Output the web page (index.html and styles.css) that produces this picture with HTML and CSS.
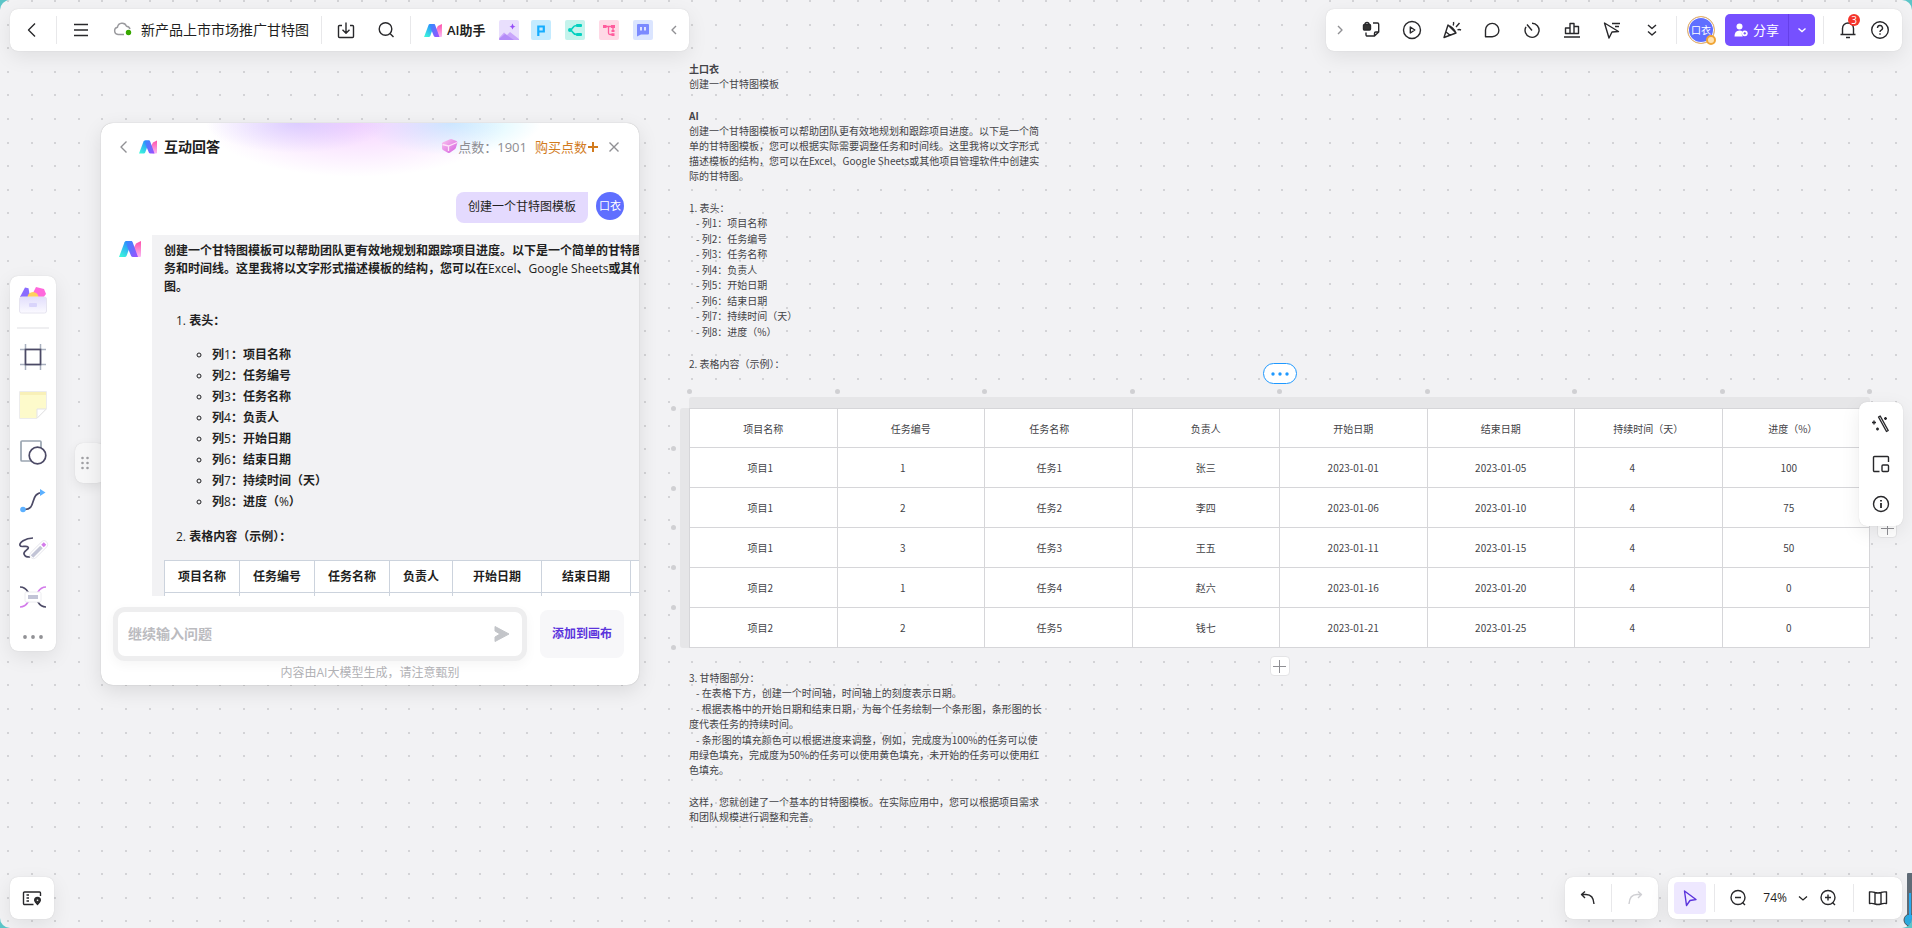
FILE: index.html
```html
<!DOCTYPE html>
<html lang="zh-CN">
<head>
<meta charset="utf-8">
<title>新产品上市市场推广甘特图</title>
<link rel="stylesheet" href="styles.css">
</head>
<body>
<svg class="defs" aria-hidden="true">
  <defs>
    <linearGradient id="g-left" x1="0" y1="1" x2="0.6" y2="0"><stop offset="0" stop-color="#3dffd8"/><stop offset="1" stop-color="#2a8cff"/></linearGradient>
    <linearGradient id="g-mid" x1="0" y1="0" x2="1" y2="1"><stop offset="0" stop-color="#2f8dff"/><stop offset="1" stop-color="#a04dff"/></linearGradient>
    <linearGradient id="g-right" x1="0" y1="0" x2="0" y2="1"><stop offset="0" stop-color="#ff4fa8"/><stop offset="1" stop-color="#f9b8f4"/></linearGradient>
    <linearGradient id="g-gem" x1="0" y1="0" x2="1" y2="1"><stop offset="0" stop-color="#fbc4ee"/><stop offset="1" stop-color="#d45fe0"/></linearGradient>
    <linearGradient id="g-box" x1="0" y1="0" x2="0" y2="1"><stop offset="0" stop-color="#e2defc"/><stop offset="1" stop-color="#fbfaff"/></linearGradient>
    <pattern id="dots" x="7" y="0" width="118" height="118" patternUnits="userSpaceOnUse">
      <path id="dotrow" d="M0 1h2m22 0h2m21 0h2m22 0h2m21 0h2" stroke="#d3d3d6" stroke-width="2"/>
      <use href="#dotrow" y="24"/><use href="#dotrow" y="47"/><use href="#dotrow" y="71"/><use href="#dotrow" y="94"/>
    </pattern>
    <symbol id="logo" viewBox="0 0 22 16">
      <path d="M0 16 5.500 1.200Q6 0 7.200 0H13L7.600 14.800Q7.100 16 5.800 16Z" fill="url(#g-left)"/>
      <path d="M22 0v15q0 1-1 1h-4.500L14 8.500 17 2.500Z" fill="url(#g-right)"/>
      <path d="M7.500 0H12q1.200 0 1.700 1.200L19 16h-5q-1.500 0-2-1.300L8 5Z" fill="url(#g-mid)"/>
    </symbol>
  </defs>
</svg>

<main class="board">
  <svg class="grid" aria-hidden="true"><rect width="100%" height="100%" fill="url(#dots)"/></svg>

  <article class="node">
    <div class="copy">
      <h2>土口衣</h2>
      <p>创建一个甘特图模板</p>
    </div>
    <div class="copy">
      <h2>AI</h2>
      <p>创建一个甘特图模板可以帮助团队更有效地规划和跟踪项目进度。以下是一个简单的甘特图模板，您可以根据实际需要调整任务和时间线。这里我将以文字形式描述模板的结构，您可以在Excel、Google Sheets或其他项目管理软件中创建实际的甘特图。</p>
    </div>
    <div class="copy">
      <p>1. 表头：</p>
      <ul>
        <li>- 列1：项目名称</li><li>- 列2：任务编号</li><li>- 列3：任务名称</li><li>- 列4：负责人</li>
        <li>- 列5：开始日期</li><li>- 列6：结束日期</li><li>- 列7：持续时间（天）</li><li>- 列8：进度（%）</li>
      </ul>
    </div>
    <div class="copy">
      <p>2. 表格内容（示例）：</p>
    </div>

    <section class="sheet">
      <button class="more" aria-label="更多"><svg width="20" height="4" viewBox="0 0 20 4"><g fill="#1e98ff"><circle cx="3" cy="2" r="1.700"/><circle cx="10" cy="2" r="1.700"/><circle cx="17" cy="2" r="1.700"/></g></svg></button>
      <div class="handles cols"><i></i><i></i><i></i><i></i><i></i><i></i><i></i><i></i><i></i></div>
      <div class="handles rows"><i></i><i></i><i></i><i></i><i></i><i></i><i></i></div>
      <div class="strip strip-top"></div>
      <div class="strip strip-left"></div>
      <table class="gantt">
        <thead><tr><th>项目名称</th><th>任务编号</th><th>任务名称</th><th>负责人</th><th>开始日期</th><th>结束日期</th><th>持续时间（天）</th><th>进度（%）</th></tr></thead>
        <tbody>
          <tr><td>项目1</td><td>1</td><td>任务1</td><td>张三</td><td>2023-01-01</td><td>2023-01-05</td><td>4</td><td>100</td></tr>
          <tr><td>项目1</td><td>2</td><td>任务2</td><td>李四</td><td>2023-01-06</td><td>2023-01-10</td><td>4</td><td>75</td></tr>
          <tr><td>项目1</td><td>3</td><td>任务3</td><td>王五</td><td>2023-01-11</td><td>2023-01-15</td><td>4</td><td>50</td></tr>
          <tr><td>项目2</td><td>1</td><td>任务4</td><td>赵六</td><td>2023-01-16</td><td>2023-01-20</td><td>4</td><td>0</td></tr>
          <tr><td>项目2</td><td>2</td><td>任务5</td><td>钱七</td><td>2023-01-21</td><td>2023-01-25</td><td>4</td><td>0</td></tr>
        </tbody>
      </table>
      <button class="add add-row" aria-label="添加行"><svg width="13" height="13" viewBox="0 0 13 13"><path d="M6.500 0v13M0 6.500h13" stroke="#8f8f94"/></svg></button>
      <button class="add add-col" aria-label="添加列"><svg width="13" height="13" viewBox="0 0 13 13"><path d="M6.500 0v13M0 6.500h13" stroke="#8f8f94"/></svg></button>
    </section>

    <div class="copy">
      <p>3. 甘特图部分：</p>
      <p class="item">- 在表格下方，创建一个时间轴，时间轴上的刻度表示日期。</p>
      <p class="item">- 根据表格中的开始日期和结束日期，为每个任务绘制一个条形图，条形图的长度代表任务的持续时间。</p>
      <p class="item">- 条形图的填充颜色可以根据进度来调整，例如，完成度为100%的任务可以使用绿色填充，完成度为50%的任务可以使用黄色填充，未开始的任务可以使用红色填充。</p>
    </div>
    <div class="copy">
      <p>这样，您就创建了一个基本的甘特图模板。在实际应用中，您可以根据项目需求和团队规模进行调整和完善。</p>
    </div>
  </article>

  <header class="bar top-left">
    <button class="ico w46 back" aria-label="返回"><svg width="20" height="20" viewBox="0 0 20 20"><path d="M13 3.500 6.500 10 13 16.500"/></svg></button>
    <span class="rule"></span>
    <button class="ico w48" aria-label="菜单"><svg width="20" height="20" viewBox="0 0 20 20"><path d="M3 4.500h14M3 10h14M3 15.500h14"/></svg></button>
    <svg class="cloud" width="20" height="16" viewBox="0 0 20 16"><path d="M11 12.500H5a3.700 3.700 0 0 1-.5-7.300 4.700 4.700 0 0 1 9-1 4 4 0 0 1 3.500 3" fill="none" stroke="#9a9a9e" stroke-width="1.400"/><circle cx="15.500" cy="10.500" r="2.700" fill="#38a800"/></svg>
    <h1 class="title">新产品上市市场推广甘特图</h1>
    <span class="rule"></span>
    <button class="ico w48" aria-label="导出"><svg width="20" height="20" viewBox="0 0 20 20"><path d="M6 5.500H3.500a1 1 0 0 0-1 1v10a1 1 0 0 0 1 1h13a1 1 0 0 0 1-1v-10a1 1 0 0 0-1-1H14M10 2.500v10.500M6.500 9.700l3.500 3.500 3.500-3.500"/></svg></button>
    <button class="ico w32" aria-label="搜索"><svg width="20" height="20" viewBox="0 0 20 20"><circle cx="9.500" cy="9" r="6.300"/><path d="m14 13.500 3.500 3.500"/></svg></button>
    <span class="rule gap"></span>
    <button class="ai"><svg width="18" height="13" aria-hidden="true"><use href="#logo"/></svg>AI助手</button>
    <button class="tile" aria-label="AI绘画"><svg width="20" height="20" viewBox="0 0 20 20"><rect width="20" height="20" rx="2" fill="#e9dffd"/><path d="M0 18 5 12.500 8 15l3-3 9 7v1H0Z" fill="#c9a6fb"/><path d="m0 19 6-5 9 6H1Z" fill="#b48cf8"/><path d="M13.500 3.500q.4 2.600 3 3-2.600.4-3 3-.4-2.600-3-3 2.600-.4 3-3" fill="#9850f8"/></svg></button>
    <button class="tile" aria-label="AI PPT"><svg width="20" height="20" viewBox="0 0 20 20"><rect width="20" height="20" rx="2" fill="#c4ebff"/><path d="M7.300 16V6.500h5.500v5H7.500" fill="none" stroke="#15adff" stroke-width="2.200"/></svg></button>
    <button class="tile wide" aria-label="AI思维导图"><svg width="20" height="20" viewBox="0 0 20 20"><rect width="20" height="20" rx="2" fill="#c5f3ec"/><path d="M15 5.500h-3.500Q9 5.500 7.500 8L6 10l1.500 2q1.500 2.500 4 2.500H15M5 10h1" fill="none" stroke="#05d1c0" stroke-width="1.600"/><rect x="11" y="4" width="6" height="3" rx="1" fill="#05d1c0"/><rect x="11" y="13" width="6" height="3" rx="1" fill="#05d1c0"/><circle cx="5" cy="10" r="2" fill="#05d1c0"/></svg></button>
    <button class="tile wide" aria-label="AI流程图"><svg width="20" height="20" viewBox="0 0 20 20"><rect width="20" height="20" rx="2" fill="#ffd9e6"/><path d="M6 6.500h8M9.500 6.500v6.500q0 1.500 1.500 1.500h3M14 6.500v4" fill="none" stroke="#ff5c9d" stroke-width="1.300"/><path d="M4 5h3.500v3H4zM12 5h4v3h-4zM12.500 10h3v2h-3zM12.500 13.200h3v2.800h-3z" fill="#ff5c9d"/></svg></button>
    <button class="tile wide" aria-label="AI对话"><svg width="20" height="20" viewBox="0 0 20 20"><rect width="20" height="20" rx="2" fill="#dbe5ff"/><path d="M5 4h10q1 0 1 1v8.500q0 1-1 1H8L4 16.500V5q0-1 1-1" fill="#7b8aff"/><path d="M8 7v3.500M12 7v3.500" stroke="#fff" stroke-width="1.500"/></svg></button>
    <button class="ico fold dim" aria-label="收起"><svg width="16" height="16" viewBox="0 0 16 16"><path d="M10 4 6 8l4 4"/></svg></button>
  </header>

  <header class="bar top-right">
    <button class="ico w24 dim" aria-label="展开"><svg width="16" height="16" viewBox="0 0 16 16"><path d="m6 4 4 4-4 4"/></svg></button>
    <button class="ico w40" aria-label="锁定"><svg width="20" height="20" viewBox="0 0 20 20"><path d="M11 3h4.500a1.200 1.200 0 0 1 1.200 1.200V12L12.500 16H5.200A1.200 1.200 0 0 1 4 14.800V12.500M16.700 12h-3a1.200 1.200 0 0 0-1.200 1.200V16"/><rect x="1.500" y="4.500" width="7" height="5.500" rx="1" fill="#333"/><path d="M3 4.500a2 2 0 0 1 4 0"/></svg></button>
    <button class="ico w40" aria-label="播放"><svg width="20" height="20" viewBox="0 0 20 20"><circle cx="10" cy="10" r="8.500"/><path d="M8.300 7v6l4.500-3z"/></svg></button>
    <button class="ico w40" aria-label="庆祝"><svg width="20" height="20" viewBox="0 0 20 20"><path d="M6 5 2 17.500 14 13ZM4 12l4.500 3.500M6 5.500q5 1.500 8 7.500M11 5.500q1-1 .5-3.500M14 7l3.500-4M15.500 10q1.500-1 3.500 0"/></svg></button>
    <button class="ico w40" aria-label="评论"><svg width="20" height="20" viewBox="0 0 20 20"><path d="M3.500 16.800V10a6.700 6.700 0 1 1 6.700 6.800Z"/></svg></button>
    <button class="ico w40" aria-label="计时"><svg width="20" height="20" viewBox="0 0 20 20"><path d="M10 3.300a7 7 0 1 1-6 3.500M10 10.500 5 4.500"/></svg></button>
    <button class="ico w40" aria-label="投票"><svg width="20" height="20" viewBox="0 0 20 20"><path d="M3.500 13.500V8H8v5.500zM8 13.500v-10h4v10zM12 13.500V6.500h4.500v7zM2 17h16"/></svg></button>
    <button class="ico w40" aria-label="激光笔"><svg width="20" height="20" viewBox="0 0 20 20"><path d="M2.500 3 7 18l3-6 6.500-.500ZM10 3.500h8M13 6.500h4"/></svg></button>
    <button class="ico w40" aria-label="更多工具"><svg width="20" height="20" viewBox="0 0 20 20"><path d="m6 5 4 3.500L14 5M6 11.500l4 3.500 4-3.500"/></svg></button>
    <span class="rule tools-end"></span>
    <span class="avatar ring">口衣<i class="badge-gold"></i></span>
    <div class="share">
      <button class="share-main"><svg width="14" height="14" viewBox="0 0 14 14"><circle cx="5.500" cy="3.500" r="3" fill="#fff"/><path d="M.5 13.500q0-6 5-6 2 0 2.800 1-1.500 2.500.5 5Z" fill="#fff"/><circle cx="10.800" cy="10.300" r="2.900" fill="#fff"/><path d="M10.800 9v2.600M9.500 10.300h2.600" stroke="#7650ff"/></svg>分享</button>
      <button class="share-drop" aria-label="分享选项"><svg width="12" height="12" viewBox="0 0 12 12"><path d="m2.500 4.500 3.500 3 3.500-3" fill="none" stroke="#fff" stroke-width="1.400"/></svg></button>
    </div>
    <span class="rule"></span>
    <button class="ico w40 bell" aria-label="通知"><svg width="20" height="20" viewBox="0 0 20 20"><path d="M4.500 14V8.500a5.500 5.500 0 0 1 11 0V14M2.500 14.500h15M8 17.500h4"/></svg><b>3</b></button>
    <button class="ico w24" aria-label="帮助"><svg width="20" height="20" viewBox="0 0 20 20"><circle cx="10" cy="10" r="8.300"/><path d="M7.500 8a2.500 2.500 0 1 1 3.700 2.200q-1.200.6-1.200 1.800M10 13.200v1.500"/></svg></button>
  </header>

  <nav class="bar side-left">
    <button aria-label="模板"><svg width="32" height="32" viewBox="0 0 32 32"><path d="M3 13 8 3.500l3.500.8L13 13Z" fill="#8a6cff"/><path d="m19 3 8 2 2 5-3 4h-8l-2-5Z" fill="#ff68dc"/><circle cx="16" cy="13.500" r="5.500" fill="#ffd15c"/><rect x="2.500" y="13" width="27" height="16" rx="2" fill="url(#g-box)" stroke="#e6e4f0"/><rect x="12" y="19" width="8" height="4" rx="1" fill="#d9d4fb"/></svg></button>
    <hr>
    <button aria-label="画框"><svg width="32" height="32" viewBox="0 0 32 32" fill="none"><path d="M8.500 3v26M23.500 3v26M3 8.500h26M3 23.500h26" stroke="#a9b1bf" stroke-width="1.500"/><rect x="8.500" y="8.500" width="15" height="15" stroke="#4c4a66" stroke-width="1.700" fill="#fff"/></svg></button>
    <button aria-label="便签"><svg width="32" height="32" viewBox="0 0 32 32"><path d="M3 3h26v17l-9 9H3Z" fill="#fdfacb"/><path d="M3 3h26v3H3Z" fill="#f8f0b8"/><path d="M29 20h-9v9Z" fill="#fff" stroke="#e3e3e6"/><path d="M2.500 2.500h27V20l-9.500 9.500H2.500Z" fill="none" stroke="#ececec"/></svg></button>
    <button aria-label="形状"><svg width="32" height="32" viewBox="0 0 32 32" fill="none" stroke-width="1.700"><rect x="4" y="4" width="20" height="20" rx="1" stroke="#9aa5b1"/><circle cx="20.500" cy="18.500" r="8.300" stroke="#4c4a66" fill="#fff"/></svg></button>
    <button aria-label="连线"><svg width="32" height="32" viewBox="0 0 32 32"><path d="M6 24.500h2c12 0 4-17 18-17" fill="none" stroke="#4c4a66" stroke-width="1.700"/><circle cx="6" cy="24.500" r="2.800" fill="#5cb0ff"/><path d="m23 4 5.500 3.500-5.500 3.500z" fill="#5cb0ff"/></svg></button>
    <button aria-label="画笔"><svg width="32" height="32" viewBox="0 0 32 32" fill="none"><path d="M16 5C8 5 2 10 3 12.500c1 2.500 6-.5 8 1.500s-5 4-4 7 3 3 6 3" stroke="#4c4a66" stroke-width="1.700"/><path d="m16.500 22 10.500-10.500" stroke="#e6e6ec" stroke-width="8" stroke-linecap="round"/><path d="m16.500 22 10.500-10.500" stroke="#fff" stroke-width="6.500" stroke-linecap="round"/><path d="m15 23.500 9.500-9.500" stroke="#c2c4d6" stroke-width="3.500"/><path d="m25.500 13 2.500-2.500" stroke="#d37bea" stroke-width="3.500"/></svg></button>
    <button aria-label="思维导图"><svg width="32" height="32" viewBox="0 0 32 32" fill="none" stroke-width="1.700"><path d="M3 6q5 0 8 5t5 5 5 5 8 5" stroke="#4c4a66"/><path d="M29 6q-5 0-8 5t-5 5-5 5-8 5" stroke="#d37bea"/><rect x="8" y="11" width="16" height="10" rx="1.500" fill="#fff" stroke="#ececf0" stroke-width="1"/><rect x="11" y="14" width="10" height="4" fill="#c2c4d6"/></svg></button>
    <button class="short" aria-label="更多"><svg width="22" height="4" viewBox="0 0 22 4"><g fill="#919195"><circle cx="3" cy="2" r="1.900"/><circle cx="11" cy="2" r="1.900"/><circle cx="19" cy="2" r="1.900"/></g></svg></button>
  </nav>

  <button class="grip" aria-label="拖动"><svg width="8" height="14" viewBox="0 0 8 14"><g fill="#a0a0a4"><circle cx="1.500" cy="2" r="1.300"/><circle cx="6.500" cy="2" r="1.300"/><circle cx="1.500" cy="7" r="1.300"/><circle cx="6.500" cy="7" r="1.300"/><circle cx="1.500" cy="12" r="1.300"/><circle cx="6.500" cy="12" r="1.300"/></g></svg></button>

  <section class="chat">
    <header class="chat-head">
      <button class="ico dim" aria-label="返回"><svg width="14" height="14" viewBox="0 0 14 14"><path d="M9.500 1.500 4 7l5.500 5.500"/></svg></button>
      <svg width="18" height="14" aria-hidden="true"><use href="#logo"/></svg>
      <h2>互动回答</h2>
      <svg width="17" height="15" viewBox="0 0 17 15" aria-hidden="true"><path d="M1 5.500Q.5 4 2 3.200L9 .3q1-.4 2 0l4.500 1.700q1 .7.800 2l-1.300 4.500q-.3 1-1.200 1.700l-5 3.600q-1 .6-2 0L2 11Q1 10.300 1 9Z" fill="url(#g-gem)"/><path d="m1.500 5.500 6 1.500L16 3.500M7.500 7v5" stroke="#fde3f8" stroke-width="1.300" fill="none"/></svg>
      <span class="points">点数：1901</span>
      <button class="buy">购买点数<svg width="10" height="10" viewBox="0 0 10 10"><path d="M5 0v10M0 5h10" stroke="#d27b1e" stroke-width="2"/></svg></button>
      <button class="ico dim close" aria-label="关闭"><svg width="12" height="12" viewBox="0 0 12 12"><path d="m1.500 1.500 9 9M10.500 1.500l-9 9"/></svg></button>
    </header>
    <div class="ask"><p>创建一个甘特图模板</p><span class="avatar">口衣</span></div>
    <div class="reply">
      <svg class="bot" width="22" height="16" aria-hidden="true"><use href="#logo"/></svg>
      <div class="answer">
        <p>创建一个甘特图模板可以帮助团队更有效地规划和跟踪项目进度。以下是一个简单的甘特图<br>务和时间线。这里我将以文字形式描述模板的结构，您可以在<span class="latin">Excel</span>、<span class="latin">Google Sheets</span>或其他<br>图。</p>
        <p class="step"><span class="latin">1.</span> 表头：</p>
        <ul>
          <li>列<span class="latin">1</span>：项目名称</li><li>列<span class="latin">2</span>：任务编号</li><li>列<span class="latin">3</span>：任务名称</li><li>列<span class="latin">4</span>：负责人</li>
          <li>列<span class="latin">5</span>：开始日期</li><li>列<span class="latin">6</span>：结束日期</li><li>列<span class="latin">7</span>：持续时间（天）</li><li>列<span class="latin">8</span>：进度（<span class="latin">%</span>）</li>
        </ul>
        <p class="step"><span class="latin">2.</span> 表格内容（示例）：</p>
        <table class="mini">
          <tr><th>项目名称</th><th>任务编号</th><th>任务名称</th><th>负责人</th><th class="date">开始日期</th><th class="date">结束日期</th><th class="date"></th></tr>
          <tr><td></td><td></td><td></td><td></td><td></td><td></td><td></td></tr>
        </table>
      </div>
    </div>
    <form class="compose">
      <div class="field">
        <input type="text" placeholder="继续输入问题" aria-label="继续输入问题">
        <button type="button" aria-label="发送"><svg width="16" height="18" viewBox="0 0 16 18"><path d="M1 1.500 15 9 1 16.500V12l5-3-5-3Z" fill="#c3c5c9" stroke="#c3c5c9" stroke-linejoin="round"/></svg></button>
      </div>
      <button type="button" class="to-board">添加到画布</button>
    </form>
    <p class="note">内容由AI大模型生成，请注意甄别</p>
  </section>

  <nav class="bar side-right">
    <button class="ico" aria-label="美化"><svg width="20" height="20" viewBox="0 0 20 20"><path d="m7.500 3 1.700-1 8 14.500-1.700 1ZM14.500 3v3M13 4.500h3M3 6.500v4M1 8.500h4M6.500 13.500v3M5 15h3"/></svg></button>
    <button class="ico" aria-label="小地图"><svg width="20" height="20" viewBox="0 0 20 20"><path d="M8.500 17.500h-5a1 1 0 0 1-1-1v-13a1 1 0 0 1 1-1h13a1 1 0 0 1 1 1V8"/><rect x="11" y="11" width="6.500" height="6.500" rx="1"/></svg></button>
    <button class="ico" aria-label="信息"><svg width="20" height="20" viewBox="0 0 20 20"><circle cx="10" cy="10" r="7.500"/><path d="M10 9v5M10 6v1.500" stroke-width="1.800"/></svg></button>
  </nav>

  <button class="bar ico map-corner" aria-label="导航"><svg width="20" height="20" viewBox="0 0 20 20"><path d="M11.500 16.500h-9a1 1 0 0 1-1-1V5a1 1 0 0 1 1-1h15a1 1 0 0 1 1 1v3M4.500 7H7M4.500 10H7M4.500 13H7"/><path d="M15.500 9.500a2.800 2.800 0 0 1 2.800 2.800q0 1.700-2.800 4.200-2.800-2.500-2.800-4.200a2.800 2.800 0 0 1 2.800-2.800" fill="#333"/><circle cx="15.500" cy="12.300" r=".8" fill="#fff" stroke="none"/></svg></button>

  <div class="bottom">
    <div class="bar">
      <button class="ico w46" aria-label="撤销"><svg width="20" height="20" viewBox="0 0 20 20"><path d="M7 3.500 3.500 6.500 7 10M3.500 6.500H8q7.500 0 8 9.500"/></svg></button>
      <span class="rule"></span>
      <button class="ico w46 off" aria-label="重做"><svg width="20" height="20" viewBox="0 0 20 20"><path d="m13 3.500 3.500 3L13 10M16.500 6.500H12Q4.500 6.500 4 16"/></svg></button>
    </div>
    <div class="bar zoombar">
      <button class="ico pick" aria-label="选择"><svg width="20" height="20" viewBox="0 0 20 20"><path d="m4.500 3 2 14.500 3.500-5 6-1Z"/></svg></button>
      <span class="rule"></span>
      <button class="ico w46" aria-label="缩小"><svg width="20" height="20" viewBox="0 0 20 20"><circle cx="10" cy="9.500" r="7"/><path d="M7 9.500h6M14.500 14.500 17 17"/></svg></button>
      <button class="pct">74%<svg width="12" height="12" viewBox="0 0 12 12"><path d="m2 4.500 4 3.500 4-3.500" fill="none" stroke="#222" stroke-width="1.300"/></svg></button>
      <button class="ico w46 zin" aria-label="放大"><svg width="20" height="20" viewBox="0 0 20 20"><circle cx="10" cy="9.500" r="7"/><path d="M7 9.500h6M10 6.500v6M14.500 14.500 17 17"/></svg></button>
      <span class="rule"></span>
      <button class="ico w48" aria-label="地图"><svg width="20" height="20" viewBox="0 0 20 20"><path d="M1.500 4q3-.5 5.500.5 3 1 6 0 2.500-1 5.500-.5V15.500q-3-.5-5.500.5-3 1-6 0-2.500-1-5.500-.5ZM7 4.500V16M13 4.500V16"/></svg></button>
    </div>
  </div>

  <svg class="meter" width="9" height="56" viewBox="0 0 9 56" aria-hidden="true"><path d="M4 56V2q0-1 1-1h4v55Z" fill="#5f6b76"/><circle cx="7" cy="48" r="6" fill="#2ba9dd" stroke="#4a545e"/><path d="M7 21v26" stroke="#2ba9ee" stroke-width="2"/></svg>
</main>
</body>
</html>
```

FILE: styles.css
```css
* { box-sizing: border-box; }

html, body { height: 100%; }

body {
  margin: 0;
  background: #5cc5c8;
  color: #1f1f22;
  font: 12px/18px "Open Sans", "Noto Sans CJK SC", sans-serif;
}

h1, h2, p, ul { margin: 0; padding: 0; font-size: inherit; }
ul { list-style: none; }
svg { display: block; flex: none; }
button {
  border: 0;
  padding: 0;
  background: none;
  color: inherit;
  font: inherit;
  display: flex;
  align-items: center;
  justify-content: center;
  cursor: pointer;
}

.defs { position: absolute; width: 0; height: 0; }

.board {
  position: relative;
  height: 100vh;
  overflow: hidden;
  border-radius: 10px;
  background: #f2f2f4;
}
.grid { position: absolute; inset: 0; width: 100%; height: 100%; }

/* floating bars */
.bar {
  display: flex;
  align-items: center;
  min-height: 42px;
  background: #fff;
  border-radius: 8px;
  box-shadow: 0 0 1px rgba(0, 0, 0, .18), 0 6px 20px rgba(0, 0, 0, .08);
}
.top-left { position: absolute; left: 10px; top: 9px; }
.top-right { position: absolute; right: 10px; top: 9px; padding: 0 10px 0 2px; }
.rule { width: 1px; height: 28px; background: #e8e8ea; }
.rule.gap { margin-left: 8px; }
.tools-end { margin-left: 4px; }

.ico { height: 32px; }
.ico svg { fill: none; stroke: #28282b; stroke-width: 1.4; stroke-linejoin: round; }
.dim svg { stroke: #909094; }
.off svg { stroke: #cfcfd3; }
.w24 { width: 24px; }
.w32 { width: 32px; }
.w40 { width: 40px; }
.w46 { width: 46px; }
.w48 { width: 48px; }
.back { padding-right: 3px; }
.fold { width: 30px; margin-left: -6px; }

.cloud { margin: 0 8px; }
.title { margin-right: 12px; font-size: 14px; font-weight: 400; line-height: 20px; white-space: nowrap; }
.ai { gap: 5px; margin: 0 13px; font-size: 13px; font-weight: 600; white-space: nowrap; }
.tile { margin-right: 12px; }
.wide { margin: 0 12px 0 2px; }

.avatar {
  position: relative;
  flex: none;
  width: 28px;
  height: 28px;
  border-radius: 50%;
  background: #5f6fff;
  color: #fff;
  font-size: 11px;
  line-height: 28px;
  text-align: center;
  white-space: nowrap;
}
.ring { margin: 0 10px; border: 1px solid #f5b95a; box-shadow: inset 0 0 0 1px #fff; font-size: 10px; line-height: 26px; }
.badge-gold {
  position: absolute;
  right: -2px;
  bottom: -2px;
  width: 10px;
  height: 10px;
  border: 2px solid #f0a536;
  border-radius: 50%;
  background: #ffe2b0;
}
.share { display: flex; height: 32px; margin-right: 8px; border-radius: 5px; background: #7650ff; color: #fff; font-size: 13px; }
.share-main { width: 63px; gap: 5px; white-space: nowrap; }
.share-drop { width: 27px; border-left: 1px solid #6540e8; }
.bell { position: relative; margin-left: 4px; }
.bell b {
  position: absolute;
  left: 20px;
  top: 0;
  width: 12px;
  height: 12px;
  border-radius: 50%;
  background: #f5352b;
  color: #fff;
  font-size: 10px;
  font-weight: 400;
  line-height: 12px;
}

/* tool rail */
.side-left {
  position: absolute;
  left: 10px;
  top: 276px;
  flex-direction: column;
  width: 46px;
  padding: 8px 0 6px;
}
.side-left button { width: 46px; height: 32px; margin-bottom: 16px; }
.side-left hr { width: 32px; height: 2px; margin: -5px 0 12px; border: 0; background: #efeff1; }
.side-left button.short { height: 16px; margin: 0; }

.grip {
  position: absolute;
  left: 75px;
  top: 443px;
  width: 30px;
  height: 40px;
  padding-right: 11px;
  border-radius: 8px;
  background: #f6f6f7;
  box-shadow: 0 4px 12px rgba(0, 0, 0, .08), 0 0 1px rgba(0, 0, 0, .15);
}

/* chat panel */
.chat {
  position: absolute;
  left: 101px;
  top: 123px;
  display: flex;
  flex-direction: column;
  width: 538px;
  border-radius: 12px;
  overflow: hidden;
  background:
    radial-gradient(ellipse 90px 30px at 195px 0, rgba(176, 168, 255, .4), transparent),
    radial-gradient(ellipse 150px 54px at 255px 0, rgba(236, 160, 255, .45), transparent),
    radial-gradient(ellipse 90px 32px at 350px 0, rgba(140, 232, 255, .5), transparent),
    #fff;
  box-shadow: 0 0 1px rgba(0, 0, 0, .3), 0 6px 20px rgba(0, 0, 0, .1);
}
.chat-head { display: flex; align-items: center; height: 47px; padding: 0 19px 0 16px; }
.chat-head .ico { height: 20px; }
.chat-head svg + h2 { margin: 0 auto 0 7px; font-size: 14px; font-weight: 600; }
.chat-head > .ico:first-child { margin-right: 8px; }
.points { color: #8d8d92; font-size: 13px; }
.buy { gap: 1px; margin-left: 8px; color: #d27b1e; font-size: 13px; }
.close { margin-left: 10px; }

.ask { display: flex; align-items: flex-start; justify-content: flex-end; gap: 8px; padding: 22px 15px 12px 0; }
.ask p { padding: 6px 12px 7px; border-radius: 8px 0 8px 8px; background: #e4dafe; }

.reply { display: flex; height: 361px; overflow: hidden; }
.bot { margin: 6px 11px 0 18px; }
.answer {
  flex: 1;
  min-width: 0;
  padding: 7px 0 0 12px;
  background: #f2f2f4;
  font-weight: 600;
  white-space: nowrap;
}
.latin { font-weight: 400; }
.answer .step { margin: 16px 0 14px 12px; }
.answer ul { padding-left: 48px; list-style: circle; }
.answer li { line-height: 21px; }
.mini { border-collapse: collapse; background: #fff; }
.mini th, .mini td { height: 32px; padding: 0 13px; border: 1px solid #ccd3dd; font-weight: 600; }
.mini .date { padding: 0 20px; }

.compose { display: flex; gap: 13px; align-items: center; padding: 11px 15px 0 12px; }
.field {
  flex: 1;
  display: flex;
  align-items: center;
  height: 54px;
  padding: 0 12px 0 10px;
  border: 5px solid #eeeeef;
  border-radius: 12px;
  background: #fff;
  box-shadow: 0 4px 12px rgba(0, 0, 0, .04);
}
.field input { flex: 1; min-width: 0; border: 0; outline: 0; padding: 0; background: none; font: inherit; font-size: 14px; }
.field input::placeholder { color: #bbbbbf; font-weight: 600; }
.to-board { width: 84px; height: 48px; border-radius: 8px; background: #f7f7f9; color: #5b34dc; font-weight: 600; }
.note { padding: 3px 0; color: #b1b1b5; text-align: center; }

/* right rail */
.side-right { position: absolute; right: 9px; top: 402px; flex-direction: column; gap: 8px; width: 44px; padding: 6px 0; }

.map-corner { position: absolute; left: 10px; bottom: 9px; width: 44px; }

.bottom { position: absolute; right: 10px; bottom: 9px; display: flex; gap: 10px; }
.zoombar { padding-left: 6px; }
.pick { width: 32px; margin-right: 8px; border-radius: 4px; background: #eee8ff; }
.pick svg { stroke: #5b34dc; }
.pct { gap: 10px; margin-left: 2px; font-size: 12px; }
.zin { width: 38px; margin-right: 6px; }
.meter { position: absolute; right: 0; bottom: 0; }

/* canvas content */
.node {
  position: absolute;
  left: 689px;
  top: 61px;
  width: 1181px;
  color: #434347;
  font: 10px/15px "Noto Sans CJK SC", sans-serif;
}
.copy { width: 357px; margin-bottom: 17px; }
.copy h2 { font-weight: 600; }
.copy p, .copy li { min-height: 15px; }
.copy ul { padding-left: 7px; }
.copy li:nth-child(odd) { line-height: 16px; }
.item { text-indent: 7px; }
.item + .item { margin-top: 1px; }

.sheet { position: relative; margin: 37px 0 22px; }
.gantt { width: 100%; table-layout: fixed; border-collapse: collapse; background: #fff; }
.gantt th, .gantt td { height: 40px; padding: 0; border: 1px solid #d6d6d9; font-weight: 400; text-align: center; }
.gantt th { height: 39px; }
.gantt td:nth-child(1) { padding-right: 6px; }
.gantt td:nth-child(2) { padding-right: 16px; }
.gantt :is(th, td):nth-child(3) { padding-right: 18px; }
.gantt td:nth-child(7) { padding-right: 32px; }
.gantt th:nth-child(8) { padding-right: 6px; }
.gantt td:nth-child(8) { padding-right: 14px; }

.strip { position: absolute; background: #e6e6e8; }
.strip-top { left: 0; right: 0; top: -11px; height: 11px; border-radius: 3px 3px 0 0; }
.strip-left { left: -9px; top: 0; bottom: 0; width: 9px; border-radius: 3px 0 0 3px; }

.handles { position: absolute; display: flex; justify-content: space-between; }
.handles i { width: 5px; height: 5px; border-radius: 50%; background: #d0d0d3; }
.cols { left: -2px; right: -2px; top: -19px; }
.rows { flex-direction: column; left: -18px; top: -2px; bottom: -2px; }

.more {
  position: absolute;
  left: 50%;
  top: -45px;
  width: 34px;
  height: 21px;
  margin-left: -17px;
  border: 1px solid #1e98ff;
  border-radius: 11px;
  background: #fff;
}
.add {
  position: absolute;
  width: 20px;
  height: 20px;
  border: 1px solid #e4e4e6;
  border-radius: 4px;
  background: #fff;
}
.add-row { left: 50%; bottom: -28px; margin-left: -10px; }
.add-col { right: -27px; top: 50%; margin-top: -10px; }
```
